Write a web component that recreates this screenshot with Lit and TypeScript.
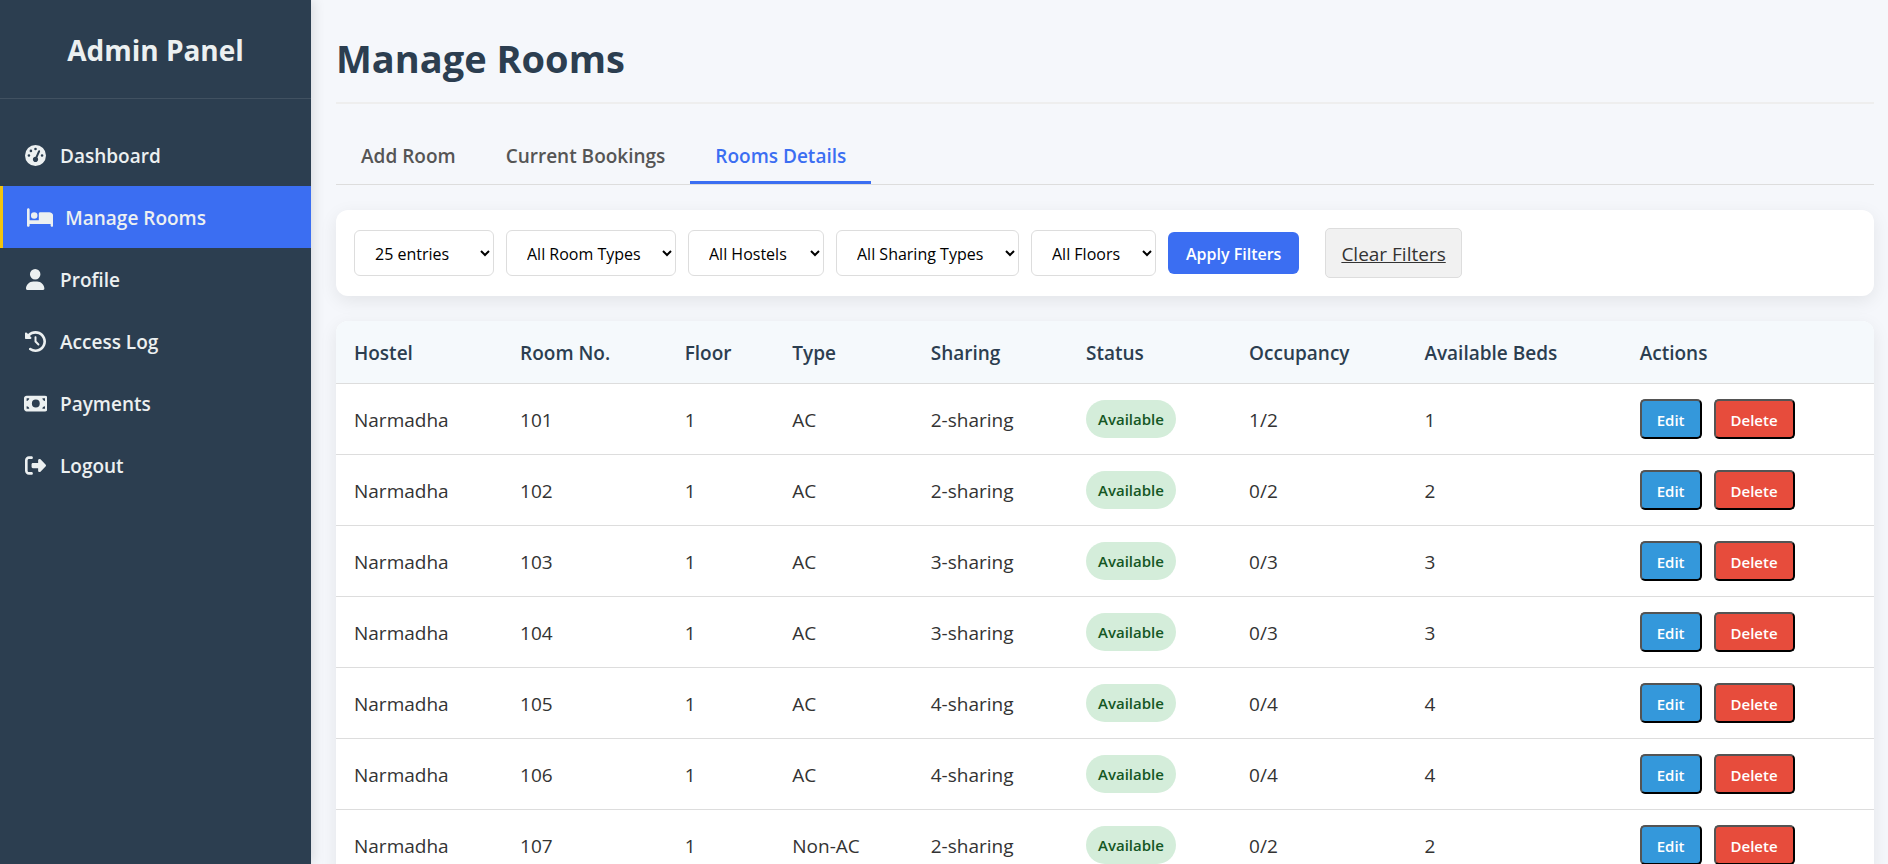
import { LitElement, html, css } from "lit";
import { customElement, state } from "lit/decorators.js";
import { classMap } from "lit/directives/class-map.js";

interface NavItem {
  label: string;
  width: number;
  path: string;
}

interface Room {
  hostel: string;
  no: string;
  floor: string;
  type: string;
  sharing: string;
  occupancy: string;
  beds: string;
}

const NAV: NavItem[] = [
  {
    label: "Dashboard",
    width: 512,
    path: "M0 256a256 256 0 1 1 512 0A256 256 0 1 1 0 256zM288 96a32 32 0 1 0 -64 0 32 32 0 1 0 64 0zM256 416c35.3 0 64-28.7 64-64c0-17.4-6.9-33.1-18.1-44.6L366 161.7c5.3-12.1-.2-26.3-12.3-31.6s-26.3 .2-31.6 12.3L257.9 288c-.6 0-1.3 0-1.9 0c-35.3 0-64 28.7-64 64s28.7 64 64 64zM176 144a32 32 0 1 0 -64 0 32 32 0 1 0 64 0zM96 288a32 32 0 1 0 0-64 32 32 0 1 0 0 64zm352-32a32 32 0 1 0 -64 0 32 32 0 1 0 64 0z",
  },
  {
    label: "Manage Rooms",
    width: 640,
    path: "M32 32c17.7 0 32 14.3 32 32V320H288V160c0-17.7 14.3-32 32-32H544c53 0 96 43 96 96V448c0 17.7-14.3 32-32 32s-32-14.3-32-32V416H352 320 64v32c0 17.7-14.3 32-32 32s-32-14.3-32-32V64C0 46.3 14.3 32 32 32zm144 96a80 80 0 1 1 0 160 80 80 0 1 1 0-160z",
  },
  {
    label: "Profile",
    width: 448,
    path: "M224 256A128 128 0 1 0 224 0a128 128 0 1 0 0 256zm-45.7 48C79.8 304 0 383.8 0 482.3C0 498.7 13.3 512 29.7 512H418.3c16.4 0 29.7-13.3 29.7-29.7C448 383.8 368.2 304 269.7 304H178.3z",
  },
  {
    label: "Access Log",
    width: 512,
    path: "M75 75L41 41C25.9 25.9 0 36.6 0 57.9V168c0 13.3 10.7 24 24 24H134.1c21.4 0 32.1-25.9 17-41l-30.8-30.8C155 85.5 203 64 256 64c106 0 192 86 192 192s-86 192-192 192c-40.8 0-78.6-12.7-109.7-34.4c-14.5-10.1-34.4-6.6-44.6 7.9s-6.6 34.4 7.9 44.6C151.2 495 201.7 512 256 512c141.4 0 256-114.6 256-256S397.4 0 256 0C185.3 0 121.3 28.7 75 75zm181 53c-13.3 0-24 10.7-24 24V256c0 6.4 2.5 12.5 7 17l72 72c9.4 9.4 24.6 9.4 33.9 0s9.4-24.6 0-33.9l-65-65V152c0-13.3-10.7-24-24-24z",
  },
  {
    label: "Payments",
    width: 576,
    path: "M64 64C28.7 64 0 92.7 0 128V384c0 35.3 28.7 64 64 64H512c35.3 0 64-28.7 64-64V128c0-35.3-28.7-64-64-64H64zm64 320H64V320c35.3 0 64 28.7 64 64zM64 192V128h64c0 35.3-28.7 64-64 64zM448 384c0-35.3 28.7-64 64-64v64H448zm64-192c-35.3 0-64-28.7-64-64h64v64zM288 160a96 96 0 1 1 0 192 96 96 0 1 1 0-192z",
  },
  {
    label: "Logout",
    width: 512,
    path: "M377.9 105.9L500.7 228.7c7.2 7.2 11.3 17.1 11.3 27.3s-4.1 20.1-11.3 27.3L377.9 406.1c-6.4 6.4-15 9.9-24 9.9c-18.7 0-33.9-15.2-33.9-33.9l0-62.1-128 0c-17.7 0-32-14.3-32-32l0-64c0-17.7 14.3-32 32-32l128 0 0-62.1c0-18.7 15.2-33.9 33.9-33.9c9 0 17.6 3.6 24 9.9zM160 96L96 96c-17.7 0-32 14.3-32 32l0 256c0 17.7 14.3 32 32 32l64 0c17.7 0 32 14.3 32 32s-14.3 32-32 32l-64 0c-53 0-96-43-96-96L0 128C0 75 43 32 96 32l64 0c17.7 0 32 14.3 32 32s-14.3 32-32 32z",
  },
];

const TABS = ["Add Room", "Current Bookings", "Rooms Details"];

const FILTERS = [
  { label: "Entries per page", options: ["25 entries", "50 entries", "100 entries"] },
  { label: "Room type", options: ["All Room Types", "AC", "Non-AC"] },
  { label: "Hostel", options: ["All Hostels", "Narmadha"] },
  { label: "Sharing type", options: ["All Sharing Types", "2-sharing", "3-sharing", "4-sharing"] },
  { label: "Floor", options: ["All Floors", "1", "2", "3"] },
];

// Column heading and its share of the table width, in percent.
const COLUMNS: [string, number][] = [
  ["Hostel", 10.8],
  ["Room No.", 10.7],
  ["Floor", 7],
  ["Type", 9],
  ["Sharing", 10.1],
  ["Status", 10.6],
  ["Occupancy", 11.4],
  ["Available Beds", 14],
  ["Actions", 16.4],
];

const room = (no: string, type: string, n: number, taken = 0): Room => ({
  hostel: "Narmadha",
  no,
  floor: "1",
  type,
  sharing: `${n}-sharing`,
  occupancy: `${taken}/${n}`,
  beds: String(n - taken),
});

const ROOMS: Room[] = [
  room("101", "AC", 2, 1),
  room("102", "AC", 2),
  room("103", "AC", 3),
  room("104", "AC", 3),
  room("105", "AC", 4),
  room("106", "AC", 4),
  room("107", "Non-AC", 2),
];

@customElement("admin-sidebar")
export class AdminSidebar extends LitElement {
  static styles = css`
    :host {
      display: block;
      background: #2c3e50;
      color: #ecf0f1;
      box-shadow: 2px 0 12px rgba(0, 0, 0, 0.12);
    }
    .brand {
      margin: 0;
      padding: 31px 25px 29px;
      border-bottom: 1px solid rgba(255, 255, 255, 0.1);
      font-size: 28px;
      line-height: 38px;
      font-weight: 700;
      text-align: center;
    }
    .list {
      margin: 25px 0 0;
      padding: 0;
      list-style: none;
    }
    .link {
      display: flex;
      align-items: center;
      gap: 12px;
      height: 62px;
      box-sizing: border-box;
      padding: 0 23px;
      color: inherit;
      font-size: 19px;
      font-weight: 600;
      text-decoration: none;
    }
    .active {
      padding-left: 24px;
      border-left: 3px solid #f1c40f;
      background: #3b6ef2;
    }
    .label {
      padding-top: 2px;
    }
    .icon {
      display: flex;
      justify-content: center;
      min-width: 25px;
    }
    .icon svg {
      display: block;
      height: 21px;
      fill: currentColor;
    }
  `;

  render() {
    return html`
      <h2 class="brand">Admin Panel</h2>
      <nav>
        <ul class="list">
          ${NAV.map(
            (n) => html`<li>
              <a class=${classMap({ link: true, active: n.label === "Manage Rooms" })} href="#">
                <span class="icon"
                  ><svg viewBox="0 0 ${n.width} 512" aria-hidden="true"><path d=${n.path}></path></svg
                ></span>
                <span class="label">${n.label}</span>
              </a>
            </li>`
          )}
        </ul>
      </nav>
    `;
  }
}

@customElement("app-root")
export class AppRoot extends LitElement {
  @state() private tab = "Rooms Details";

  static styles = css`
    :host {
      display: grid;
      grid-template-columns: 311px minmax(0, 1fr);
      height: 100vh;
      background: #f5f7fb;
      color: #333;
      font-family: "Open Sans", "Noto Sans", sans-serif;
      font-size: 19px;
      line-height: 26px;
    }
    .side {
      z-index: 1;
    }
    .main {
      overflow-y: auto;
      scrollbar-width: none;
      padding: 31px 14px 25px 25px;
    }
    .title {
      margin: 0 0 25px;
      padding-bottom: 17px;
      border-bottom: 2px solid #eee;
      color: #2c3e50;
      font-size: 38px;
      line-height: 54px;
      font-weight: 700;
    }
    .tabs {
      display: flex;
      margin-bottom: 25px;
      border-bottom: 1px solid #ddd;
    }
    .tab {
      padding: 14px 25px 12px;
      border: 0;
      border-bottom: 3px solid transparent;
      background: none;
      color: #555;
      font: inherit;
      font-weight: 600;
      cursor: pointer;
    }
    .tab.current {
      border-bottom-color: #3b6ef2;
      color: #3b6ef2;
    }
    .card {
      border-radius: 12px;
      background: #fff;
      box-shadow: 0 5px 18px rgba(0, 0, 0, 0.08);
    }
    .filters {
      display: flex;
      flex-wrap: wrap;
      align-items: center;
      gap: 12px;
      margin: 0 0 25px;
      padding: 18px;
    }
    .select {
      height: 46px;
      padding: 2px 18px 0 16px;
      border: 1px solid #ddd;
      border-radius: 6px;
      background: #fff;
      color: #000;
      font-family: inherit;
      font-size: 16px;
    }
    .apply {
      height: 42px;
      padding: 2px 18px 0;
      border: 0;
      border-radius: 6px;
      background: #3b6ef2;
      color: #fff;
      font-family: inherit;
      font-size: 16px;
      font-weight: 600;
      cursor: pointer;
    }
    .clear {
      margin-left: 14px;
      padding: 12px 15px 10px;
      border: 1px solid #ddd;
      border-radius: 5px;
      background: #f1f1f1;
      color: #333;
      text-decoration: underline;
    }
    .panel {
      overflow: clip;
    }
    .table {
      width: 100%;
      table-layout: fixed;
      border-collapse: separate;
      border-spacing: 0;
    }
    .cell {
      height: 68px;
      padding: 2px 18px 0;
      border-bottom: 1px solid #ddd;
      text-align: left;
      vertical-align: middle;
      white-space: nowrap;
    }
    .head {
      height: 60px;
      background: #f5f9fc;
      color: #2c3e50;
      font-weight: 600;
    }
    .control {
      padding-top: 0;
      height: 70px;
    }
    .badge {
      display: block;
      width: fit-content;
      padding: 8px 12px;
      border-radius: 20px;
      background: #d4edda;
      color: #155724;
      font-size: 15px;
      line-height: 22px;
      font-weight: 600;
    }
    .actions {
      display: flex;
      gap: 12px;
    }
    .btn {
      height: 40px;
      padding: 2px 15px 0;
      border: 2px outset #000;
      border-radius: 5px;
      color: #fff;
      font-family: inherit;
      font-size: 15px;
      font-weight: 600;
      cursor: pointer;
    }
    .edit {
      background: #3498db;
    }
    .delete {
      background: #e74c3c;
    }
  `;

  render() {
    return html`
      <admin-sidebar class="side"></admin-sidebar>
      <main class="main">
        <h1 class="title">Manage Rooms</h1>
        <div class="tabs" role="tablist">
          ${TABS.map(
            (t) => html`<button
              class=${classMap({ tab: true, current: t === this.tab })}
              role="tab"
              aria-selected=${t === this.tab}
              @click=${() => (this.tab = t)}
            >
              ${t}
            </button>`
          )}
        </div>
        <form class="card filters" @submit=${(e: Event) => e.preventDefault()}>
          ${FILTERS.map(
            (f) => html`<select class="select" aria-label=${f.label}>
              ${f.options.map((o) => html`<option>${o}</option>`)}
            </select>`
          )}
          <button class="apply" type="submit">Apply Filters</button>
          <a class="clear" href="#">Clear Filters</a>
        </form>
        <div class="card panel">
          <table class="table">
            <colgroup>
              ${COLUMNS.map(([, w]) => html`<col style="width:${w}%" />`)}
            </colgroup>
            <thead>
              <tr>
                ${COLUMNS.map(([name]) => html`<th class="cell head" scope="col">${name}</th>`)}
              </tr>
            </thead>
            <tbody>
              ${ROOMS.map(
                (r) => html`<tr>
                  <td class="cell">${r.hostel}</td>
                  <td class="cell">${r.no}</td>
                  <td class="cell">${r.floor}</td>
                  <td class="cell">${r.type}</td>
                  <td class="cell">${r.sharing}</td>
                  <td class="cell control"><span class="badge">Available</span></td>
                  <td class="cell">${r.occupancy}</td>
                  <td class="cell">${r.beds}</td>
                  <td class="cell control">
                    <div class="actions">
                      <button class="btn edit" type="button">Edit</button>
                      <button class="btn delete" type="button">Delete</button>
                    </div>
                  </td>
                </tr>`
              )}
            </tbody>
          </table>
        </div>
      </main>
    `;
  }
}
